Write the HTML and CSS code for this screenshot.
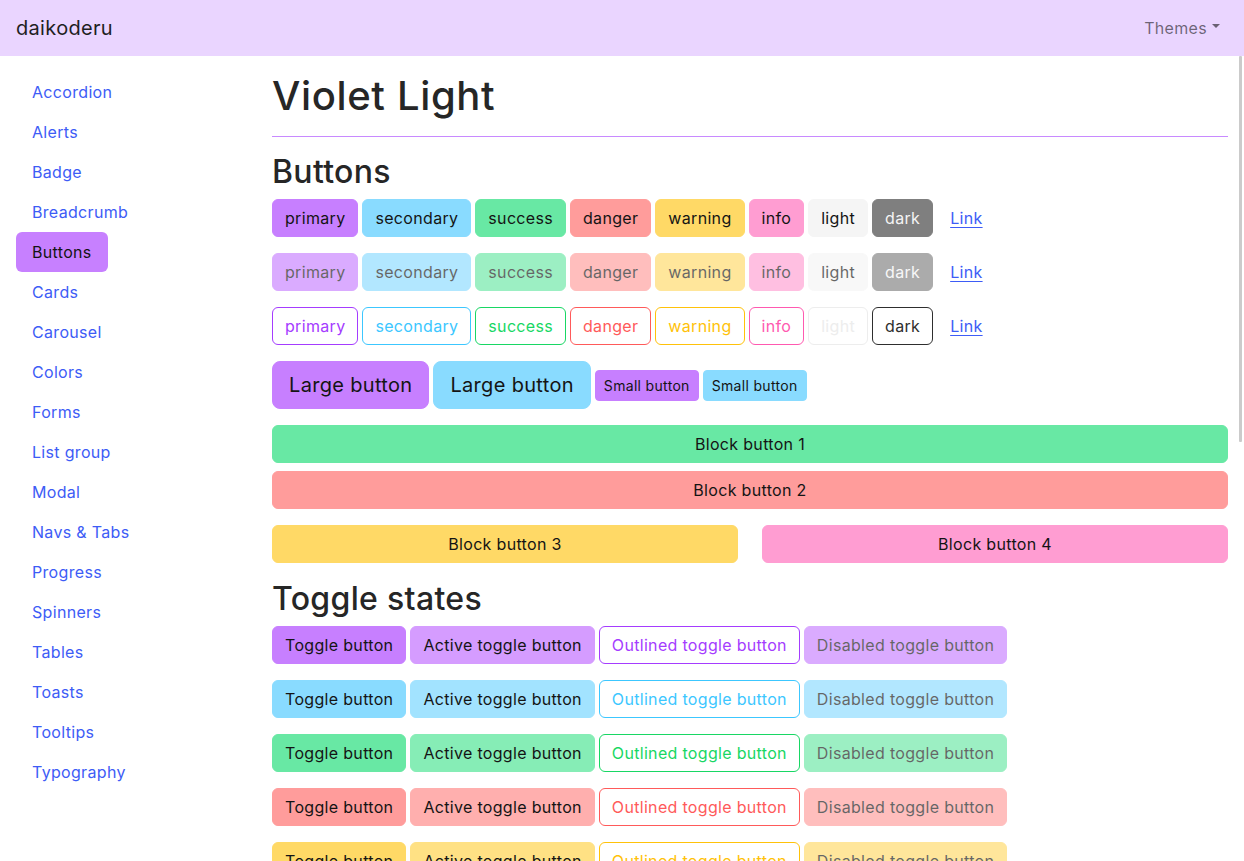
FILE: index.html
```html
<!DOCTYPE html>
<html lang="en">
<head>
<meta charset="utf-8">
<title>Violet Light</title>
<link rel="stylesheet" href="styles.css">
</head>
<body>
<header class="navbar">
  <a class="brand" href="#">daikoderu</a>
  <a class="themes" href="#">Themes<span class="caret"></span></a>
</header>
<div class="layout">
  <aside class="sidebar">
    <nav class="side-nav">
      <a href="#">Accordion</a>
      <a href="#">Alerts</a>
      <a href="#">Badge</a>
      <a href="#">Breadcrumb</a>
      <a href="#" class="active">Buttons</a>
      <a href="#">Cards</a>
      <a href="#">Carousel</a>
      <a href="#">Colors</a>
      <a href="#">Forms</a>
      <a href="#">List group</a>
      <a href="#">Modal</a>
      <a href="#">Navs &amp; Tabs</a>
      <a href="#">Progress</a>
      <a href="#">Spinners</a>
      <a href="#">Tables</a>
      <a href="#">Toasts</a>
      <a href="#">Tooltips</a>
      <a href="#">Typography</a>
    </nav>
  </aside>
  <main class="content">
    <h1 class="title">Violet Light</h1>
    <hr class="rule">
    <h2 class="section">Buttons</h2>

    <div class="btn-row">
      <button class="btn primary">primary</button>
      <button class="btn secondary">secondary</button>
      <button class="btn success">success</button>
      <button class="btn danger">danger</button>
      <button class="btn warning">warning</button>
      <button class="btn info">info</button>
      <button class="btn light">light</button>
      <button class="btn dark">dark</button>
      <button class="btn link">Link</button>
    </div>
    <div class="btn-row">
      <button class="btn primary disabled">primary</button>
      <button class="btn secondary disabled">secondary</button>
      <button class="btn success disabled">success</button>
      <button class="btn danger disabled">danger</button>
      <button class="btn warning disabled">warning</button>
      <button class="btn info disabled">info</button>
      <button class="btn light disabled">light</button>
      <button class="btn dark disabled">dark</button>
      <button class="btn link">Link</button>
    </div>
    <div class="btn-row">
      <button class="btn o-primary">primary</button>
      <button class="btn o-secondary">secondary</button>
      <button class="btn o-success">success</button>
      <button class="btn o-danger">danger</button>
      <button class="btn o-warning">warning</button>
      <button class="btn o-info">info</button>
      <button class="btn o-light">light</button>
      <button class="btn o-dark">dark</button>
      <button class="btn link">Link</button>
    </div>
    <div class="btn-row center">
      <button class="btn lg primary">Large button</button>
      <button class="btn lg secondary">Large button</button>
      <button class="btn sm primary">Small button</button>
      <button class="btn sm secondary">Small button</button>
    </div>
    <div class="block-stack">
      <button class="btn block success">Block button 1</button>
      <button class="btn block danger">Block button 2</button>
    </div>
    <div class="block-grid">
      <button class="btn block warning">Block button 3</button>
      <button class="btn block info">Block button 4</button>
    </div>

    <h2 class="section">Toggle states</h2>
    <div class="btn-row">
      <button class="btn primary">Toggle button</button>
      <button class="btn a-primary">Active toggle button</button>
      <button class="btn o-primary">Outlined toggle button</button>
      <button class="btn primary disabled">Disabled toggle button</button>
    </div>
    <div class="btn-row">
      <button class="btn secondary">Toggle button</button>
      <button class="btn a-secondary">Active toggle button</button>
      <button class="btn o-secondary">Outlined toggle button</button>
      <button class="btn secondary disabled">Disabled toggle button</button>
    </div>
    <div class="btn-row">
      <button class="btn success">Toggle button</button>
      <button class="btn a-success">Active toggle button</button>
      <button class="btn o-success">Outlined toggle button</button>
      <button class="btn success disabled">Disabled toggle button</button>
    </div>
    <div class="btn-row">
      <button class="btn danger">Toggle button</button>
      <button class="btn a-danger">Active toggle button</button>
      <button class="btn o-danger">Outlined toggle button</button>
      <button class="btn danger disabled">Disabled toggle button</button>
    </div>
    <div class="btn-row">
      <button class="btn warning">Toggle button</button>
      <button class="btn a-warning">Active toggle button</button>
      <button class="btn o-warning">Outlined toggle button</button>
      <button class="btn warning disabled">Disabled toggle button</button>
    </div>
    <div class="btn-row">
      <button class="btn info">Toggle button</button>
      <button class="btn a-info">Active toggle button</button>
      <button class="btn o-info">Outlined toggle button</button>
      <button class="btn info disabled">Disabled toggle button</button>
    </div>
  </main>
</div>
<div class="scroll-thumb"></div>
</body>
</html>
```
FILE: styles.css
```css
* { box-sizing: border-box; }
html, body { height: 100%; overflow: hidden; }
body {
  margin: 0;
  font-family: Inter, "Noto Sans", sans-serif;
  font-size: 16px;
  line-height: 1.5;
  letter-spacing: 0.02em;
  color: #212121;
  background: #fff;
}
a { text-decoration: none; }

.navbar {
  height: 56px;
  background: #ead5ff;
  display: flex;
  align-items: center;
  justify-content: space-between;
  padding: 0 16px;
}
.brand { font-size: 20px; color: #1f1f1f; line-height: 30px; }
.themes {
  color: rgba(0,0,0,.55);
  padding: 8px;
  display: flex;
  align-items: center;
}
.caret {
  display: inline-block;
  margin-left: 5px;
  border-top: 4.5px solid rgba(0,0,0,.55);
  border-left: 4px solid transparent;
  border-right: 4px solid transparent;
  margin-top: -4px;
}

.layout { display: flex; }
.sidebar { width: 256px; flex: none; padding: 16px; }
.side-nav { display: flex; flex-direction: column; align-items: flex-start; }
.side-nav a {
  color: #3d5cf6;
  padding: 8px 16px;
  line-height: 24px;
  border-radius: 6px;
}
.side-nav a.active { background: #c780ff; color: #141414; }

.content { flex: 1; min-width: 0; padding: 16px 16px 0 16px; }
.title {
  font-size: 40px;
  font-weight: 500;
  line-height: 48px;
  margin: 0 0 8px;
  color: #262626;
  letter-spacing: 0.016em;
}
.rule { border: 0; border-top: 1px solid #c88aff; margin: 16px 0; }
.section {
  font-size: 32px;
  font-weight: 500;
  line-height: 38px;
  margin: 0 0 8px;
  color: #262626;
}

.btn-row { display: flex; gap: 4px; margin-bottom: 16px; }
.btn-row.center { align-items: center; }

.btn {
  font: inherit;
  letter-spacing: inherit;
  font-size: 16px;
  line-height: 24px;
  padding: 6px 12px;
  border: 1px solid transparent;
  border-radius: 6px;
  color: #141414;
  background: transparent;
  cursor: pointer;
  white-space: nowrap;
}
.btn.lg { font-size: 20px; line-height: 30px; padding: 8px 16px; border-radius: 8px; }
.btn.sm { font-size: 14px; line-height: 21px; padding: 4px 8px; border-radius: 4px; }

.primary { background: #c77fff; border-color: #c77fff; }
.secondary { background: #89dbff; border-color: #89dbff; }
.success { background: #68e8a4; border-color: #68e8a4; }
.danger { background: #ff9c9b; border-color: #ff9c9b; }
.warning { background: #ffd966; border-color: #ffd966; }
.info { background: #ff9dd2; border-color: #ff9dd2; }
.light { background: #f5f5f5; border-color: #f5f5f5; }
.dark { background: #7f7f7f; border-color: #7f7f7f; color: #f4f4f4; }
.disabled { opacity: .65; }

.link { color: #3d5cf6; text-decoration: underline; text-underline-offset: 3px; }

.o-primary { border-color: #a53cff; color: #a53cff; }
.o-secondary { border-color: #3cc7ff; color: #3cc7ff; }
.o-success { border-color: #18d764; color: #18d764; }
.o-danger { border-color: #ff5a5a; color: #ff5a5a; }
.o-warning { border-color: #ffc20a; color: #ffc20a; }
.o-info { border-color: #ff59b0; color: #ff59b0; }
.o-light { border-color: #ededed; color: #ededed; }
.o-dark { border-color: #2e2e2e; color: #2e2e2e; }

.a-primary { background: #d59cff; border-color: #d59cff; }
.a-secondary { background: #a2e3ff; border-color: #a2e3ff; }
.a-success { background: #86edb6; border-color: #86edb6; }
.a-danger { background: #ffafae; border-color: #ffafae; }
.a-warning { background: #ffe184; border-color: #ffe184; }
.a-info { background: #ffb0db; border-color: #ffb0db; }

.block { width: 100%; display: block; }
.block-stack { display: flex; flex-direction: column; gap: 8px; margin-bottom: 16px; }
.block-grid { display: grid; grid-template-columns: 1fr 1fr; gap: 24px; margin-bottom: 17px; }

.scroll-thumb {
  position: fixed;
  top: 56px;
  right: 2px;
  width: 3px;
  height: 386px;
  background: #cbcbcb;
  border-radius: 1px;
}
```
